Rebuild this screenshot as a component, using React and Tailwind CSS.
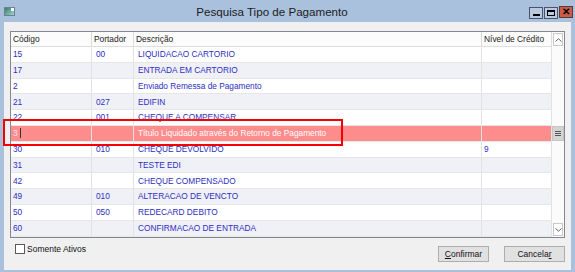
import React from "react";

const rows = [
  ["15", "00", "LIQUIDACAO CARTORIO", ""],
  ["17", "", "ENTRADA EM CARTORIO", ""],
  ["2", "", "Enviado Remessa de Pagamento", ""],
  ["21", "027", "EDIFIN", ""],
  ["22", "001", "CHEQUE A COMPENSAR", ""],
  ["3", "", "Título Liquidado através do Retorno de Pagamento", "", true],
  ["30", "010", "CHEQUE DEVOLVIDO", "9"],
  ["31", "", "TESTE EDI", ""],
  ["42", "", "CHEQUE COMPENSADO", ""],
  ["49", "010", "ALTERACAO DE VENCTO", ""],
  ["50", "050", "REDECARD DEBITO", ""],
  ["60", "", "CONFIRMACAO DE ENTRADA", ""],
];

function Row({ r, i }) {
  const sel = r[4];
  const bg = sel ? "bg-[#fd8c8c]" : i % 2 ? "bg-[#f0f1f7]" : "bg-white";
  const tc = sel ? "text-white" : "text-[#2e2ec0]";
  const cell = "h-full flex items-center border-r border-[#e2e2e2] whitespace-nowrap overflow-hidden";
  return (
    <div className={`flex h-[15.8px] border-b border-[#e6e6e6] ${bg} ${tc}`}>
      <div className={`${cell} w-[81px] pl-[2px] relative`}>
        <span className={sel ? "text-[#e8e8ff]" : ""}>{r[0]}</span>
        {sel && <span className="ml-[2px] w-[1px] h-[10px] bg-[#333]" />}
      </div>
      <div className={`${cell} w-[42px] pl-[4px]`}>{r[1]}</div>
      <div className={`${cell} w-[348px] pl-[4px]`}>{r[2]}</div>
      <div className={`${cell} w-[70px] pl-[2px]`}>{r[3]}</div>
    </div>
  );
}

export default function App() {
  return (
    <div
      className="relative w-[575px] h-[272px] overflow-hidden bg-[#a9c1dd] flex flex-col"
      style={{ fontFamily: '"Liberation Sans", Arial, sans-serif' }}
    >
      {/* title bar */}
      <div className="h-[22px] flex items-center shrink-0">
        <div className="ml-[4px] w-[11px] h-[9px] border border-[#6f7f90] bg-gradient-to-br from-[#2f7f70] to-[#9fd8c8] relative">
          <div className="absolute right-0 top-0 w-[3px] h-[3px] bg-white" />
        </div>
        <div className="flex-1 text-center text-[11.6px] text-[#1b1b1b] leading-none pt-[1px]">
          Pesquisa Tipo de Pagamento
        </div>
        <div className="flex items-start gap-[1px] mr-[2px] self-start mt-[7px]">
          <div className="w-[14px] h-[12px] border border-[#4a5466] bg-[#b8cae2] flex items-end justify-center pb-[2px]">
            <div className="w-[7px] h-[2px] bg-black" />
          </div>
          <div className="w-[14px] h-[12px] border border-[#4a5466] bg-[#b8cae2] flex items-center justify-center">
            <div className="w-[8px] h-[6px] border border-black border-t-2" />
          </div>
          <div className="w-[14px] h-[12px] -mt-[1px] border border-[#5a3a34] bg-[#cc5a48] flex items-center justify-center text-[10px] font-bold text-black leading-none">
            ✕
          </div>
        </div>
      </div>

      {/* body */}
      <div className="flex-1 mx-[4px] mb-[2px] bg-[#f0f0f0] flex flex-col px-[6px] pt-[9px]">
        <div className="h-[207px] border border-[#828790] bg-white flex text-[8.3px] leading-none overflow-hidden">
          <div className="w-[541px] flex flex-col overflow-hidden">
            <div className="flex h-[15px] shrink-0 bg-[#fcfcfc] border-b border-[#dedede] text-[#222] text-[8.4px]">
              <div className="w-[81px] h-full flex items-center pl-[2px] border-r border-[#dcdcdc]">Código</div>
              <div className="w-[42px] h-full flex items-center pl-[2px] border-r border-[#dcdcdc]">Portador</div>
              <div className="w-[348px] h-full flex items-center pl-[2px] border-r border-[#dcdcdc]">Descrição</div>
              <div className="w-[70px] h-full flex items-center pl-[2px] border-r border-[#dcdcdc]">Nível de Crédito</div>
            </div>
            {rows.map((r, i) => (
              <Row key={i} r={r} i={i} />
            ))}
          </div>
          {/* scrollbar */}
          <div className="w-[12px] flex flex-col bg-[#fbfbfb]">
            <div className="h-[13px] mx-[1px] mt-[1px] border border-[#c9c9c9] bg-white flex items-center justify-center">
              <svg width="7" height="4" viewBox="0 0 7 4"><path d="M0.5 3.5 L3.5 0.8 L6.5 3.5" fill="none" stroke="#606060" strokeWidth="1" /></svg>
            </div>
            <div className="h-[80px]" />
            <div className="h-[15px] bg-[#d4d4d4] border border-[#c4c4c4] flex flex-col items-center justify-center gap-[1px]">
              <div className="w-[6px] h-[1px] bg-[#555]" />
              <div className="w-[6px] h-[1px] bg-[#555]" />
              <div className="w-[6px] h-[1px] bg-[#555]" />
            </div>
            <div className="flex-1" />
            <div className="h-[13px] mx-[1px] mb-[1px] border border-[#c9c9c9] bg-white flex items-center justify-center">
              <svg width="7" height="4" viewBox="0 0 7 4"><path d="M0.5 0.5 L3.5 3.2 L6.5 0.5" fill="none" stroke="#606060" strokeWidth="1" /></svg>
            </div>
          </div>
        </div>

        {/* bottom */}
        <div className="flex items-start justify-between text-[8.5px] leading-none text-[#111]">
          <label className="flex items-center mt-[6px] ml-[5px]">
            <span className="w-[10px] h-[10px] border border-[#5a5a5a] bg-white" />
            <span className="ml-[2px]">Somente Ativos</span>
          </label>
          <div className="flex gap-[15px] mt-[8px]">
            <div className="w-[51px] h-[16px] border border-[#adadad] bg-[#e1e1e1] flex items-center justify-center">
              <span><span className="underline">C</span>onfirmar</span>
            </div>
            <div className="w-[61px] h-[16px] border border-[#adadad] bg-[#e1e1e1] flex items-center justify-center">
              <span>Cancela<span className="underline">r</span></span>
            </div>
          </div>
        </div>
      </div>

      {/* annotation */}
      <div className="absolute left-[3px] top-[119px] w-[340px] h-[27px] border-2 border-[#f40000]" />
    </div>
  );
}
